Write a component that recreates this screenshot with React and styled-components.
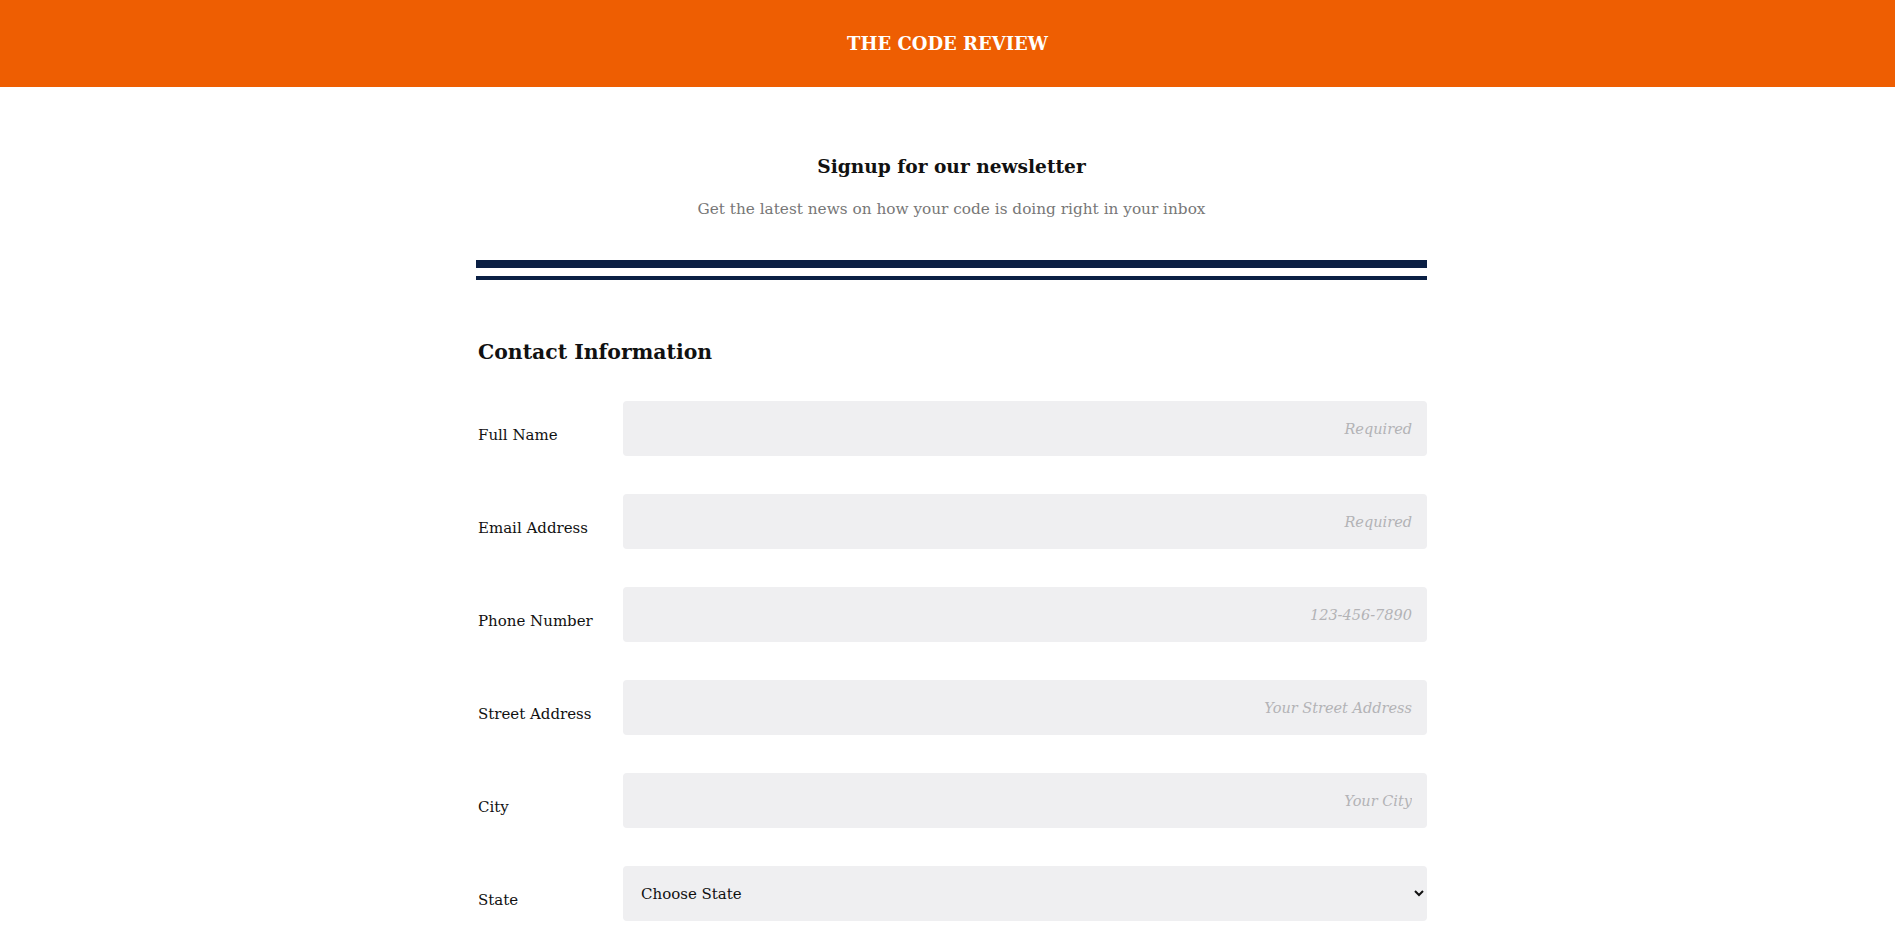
import styled, { createGlobalStyle } from "styled-components";

const GlobalStyle = createGlobalStyle`
  body {
    margin: 0;
    background: #ffffff;
    font-family: "DejaVu Serif", "Liberation Serif", serif;
    color: #111111;
  }
`;

const Header = styled.header`
  height: 87px;
  background: #ee5e02;
  display: flex;
  align-items: center;
  justify-content: center;
`;

const Brand = styled.h1`
  margin: 0;
  color: #ffffff;
  font-size: 18px;
  font-weight: 700;
`;

const Main = styled.main`
  width: 959px;
  box-sizing: border-box;
  padding-left: 8px;
  margin: 0 auto;
`;

const Intro = styled.section`
  padding-top: 66px;
  text-align: center;
`;

const Title = styled.h2`
  margin: 0;
  font-size: 18.6px;
  font-weight: 700;
  line-height: 28px;
`;

const Subtitle = styled.p`
  margin: 17px 0 0;
  font-size: 15.3px;
  line-height: 22px;
  color: #777777;
`;

const Divider = styled.div`
  margin-top: 40px;
  height: 8px;
  border-top: 8px solid #0a1f44;
  border-bottom: 4px solid #0a1f44;
`;

const SectionTitle = styled.h3`
  margin: 57px 0 0 2px;
  font-size: 20.4px;
  line-height: 30px;
  font-weight: 700;
`;

const Form = styled.form`
  margin-top: 34px;
  display: flex;
  flex-direction: column;
  gap: 38px;
`;

const Row = styled.div`
  display: grid;
  grid-template-columns: 147px 1fr;
  align-items: center;
`;

const Label = styled.label`
  padding-left: 2px;
  padding-top: 12px;
  font-size: 15px;
  color: #111111;
`;

const fieldBase = `
  box-sizing: border-box;
  height: 55px;
  width: 100%;
  border: none;
  border-radius: 4px;
  background: #efeff1;
  font-family: "DejaVu Serif", "Liberation Serif", serif;
  font-size: 14.5px;
  outline: none;
`;

const Input = styled.input`
  ${fieldBase}
  padding: 0 15px;
  text-align: right;
  &::placeholder {
    color: #b3b3b6;
    font-style: italic;
  }
`;

const Select = styled.select`
  ${fieldBase}
  padding: 0 14px;
  font-size: 15px;
  color: #111111;
`;

const fields = [
  { id: "name", label: "Full Name", placeholder: "Required" },
  { id: "email", label: "Email Address", placeholder: "Required" },
  { id: "phone", label: "Phone Number", placeholder: "123-456-7890" },
  { id: "street", label: "Street Address", placeholder: "Your Street Address" },
  { id: "city", label: "City", placeholder: "Your City" },
];

export default function App() {
  return (
    <>
      <GlobalStyle />
      <Header>
        <Brand>THE CODE REVIEW</Brand>
      </Header>
      <Main>
        <Intro>
          <Title>Signup for our newsletter</Title>
          <Subtitle>Get the latest news on how your code is doing right in your inbox</Subtitle>
        </Intro>
        <Divider />
        <SectionTitle>Contact Information</SectionTitle>
        <Form>
          {fields.map((f) => (
            <Row key={f.id}>
              <Label htmlFor={f.id}>{f.label}</Label>
              <Input id={f.id} placeholder={f.placeholder} />
            </Row>
          ))}
          <Row>
            <Label htmlFor="state">State</Label>
            <Select id="state" defaultValue="">
              <option value="">Choose State</option>
              <option value="CA">California</option>
              <option value="NY">New York</option>
              <option value="TX">Texas</option>
            </Select>
          </Row>
        </Form>
      </Main>
    </>
  );
}
